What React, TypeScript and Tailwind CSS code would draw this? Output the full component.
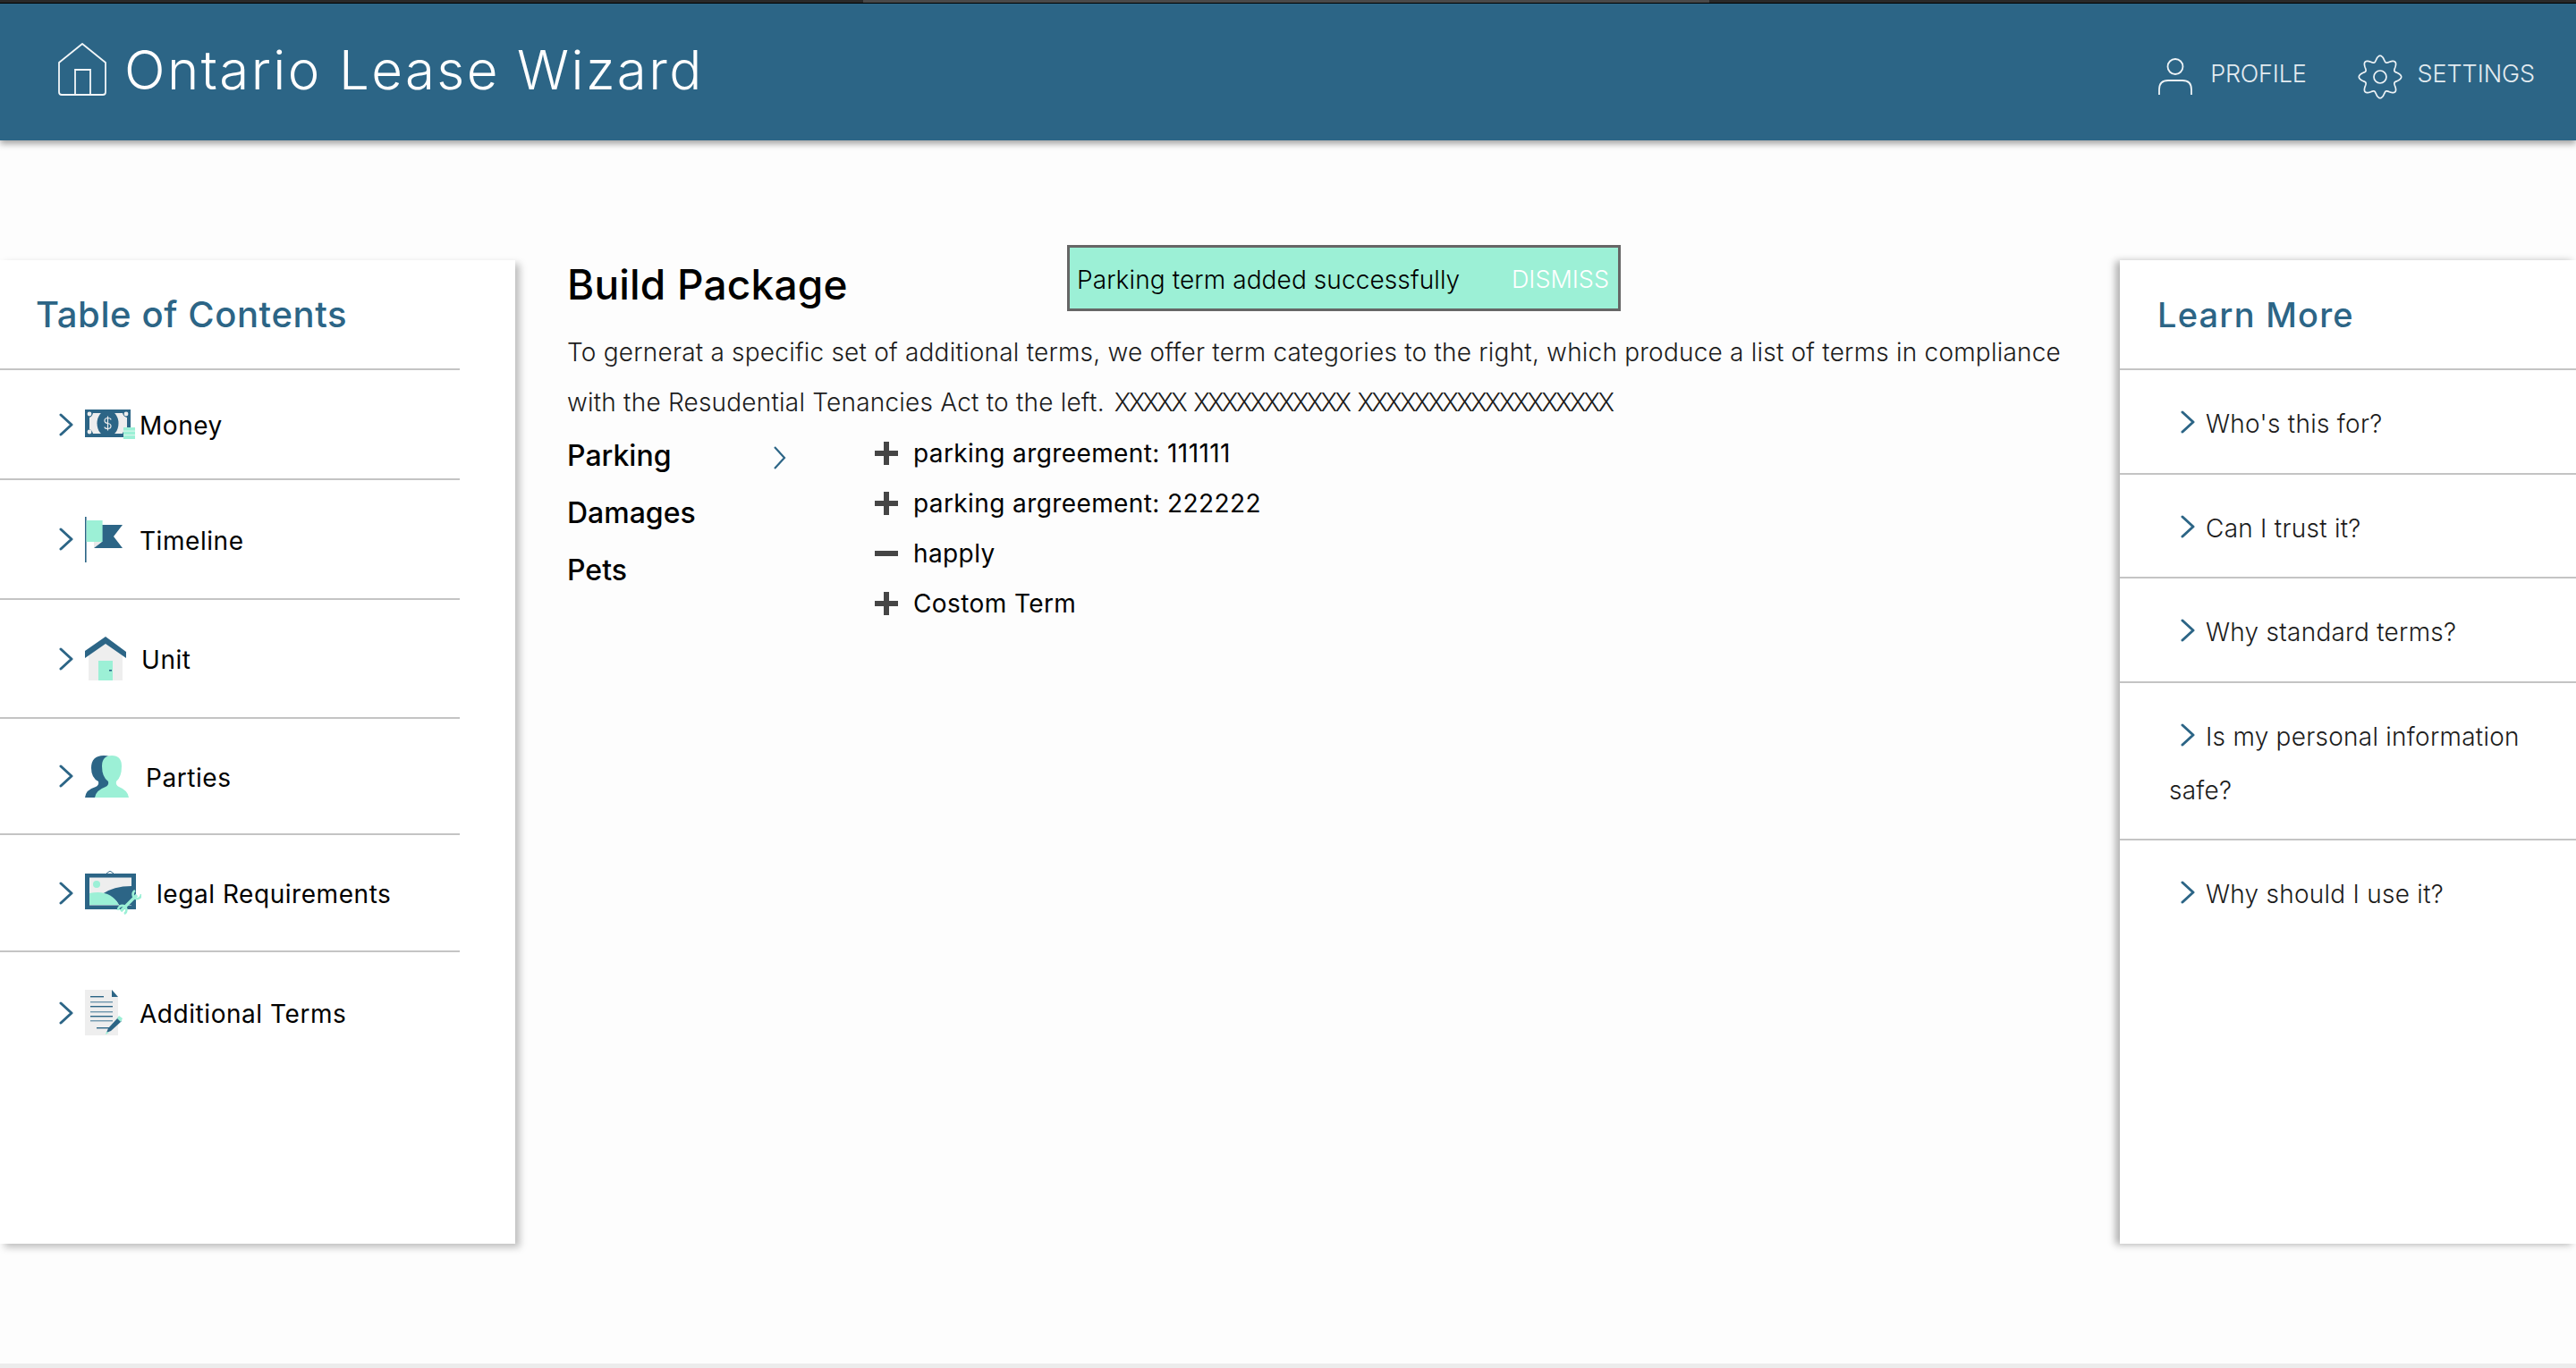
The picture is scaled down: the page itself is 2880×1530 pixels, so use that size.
import React from "react";

const BLUE = "#2c6586";
const MINT = "#9cf0d6";

function Chevron({ className = "" }: { className?: string }) {
  return (
    <svg width="16" height="26" viewBox="0 0 16 26" fill="none" className={className}>
      <path d="M2 2 L14 13 L2 24" stroke={BLUE} strokeWidth="3" strokeLinecap="round" strokeLinejoin="round" />
    </svg>
  );
}

function gearPath() {
  const pts: string[] = [];
  const n = 180;
  for (let i = 0; i <= n; i++) {
    const t = (i / n) * Math.PI * 2;
    const r = 20.5 + 3.2 * Math.cos(8 * t);
    const x = 25 + r * Math.sin(t);
    const y = 25 - r * Math.cos(t);
    pts.push(`${i === 0 ? "M" : "L"}${x.toFixed(2)} ${y.toFixed(2)}`);
  }
  return pts.join(" ") + "Z";
}

function HomeLogo() {
  return (
    <svg width="54" height="60" viewBox="0 0 54 60" fill="none" stroke="#f2f6f8" strokeWidth="1.8">
      <path d="M1 22 L27 1 L53 22 V55 Q53 58 50 58 H4 Q1 58 1 55 Z" strokeLinejoin="round" />
      <path d="M19 58 V30 H36 V58" />
    </svg>
  );
}

function MoneyIcon() {
  return (
    <svg width="56" height="33" viewBox="0 0 56 33">
      <rect x="0" y="0" width="51" height="31" fill={BLUE} />
      <path d="M5 9 Q8 8 9 4 H42 Q43 8 47 9 V22 Q43 23 42 27 H9 Q8 23 5 22 Z" fill="#eeeeee" />
      <ellipse cx="25.5" cy="15.5" rx="12" ry="15" fill={BLUE} />
      <circle cx="5" cy="5" r="2.4" fill="#eee" />
      <circle cx="46" cy="5" r="2.4" fill="#eee" />
      <circle cx="5" cy="25" r="2.4" fill="#eee" />
      <path d="M29 11.5 Q29 9.5 25.5 9.5 Q22 9.5 22 12.5 Q22 15 25.5 15.5 Q29 16 29 18.5 Q29 21.5 25.5 21.5 Q22 21.5 22 19.5 M25.5 7.5 V23.5" stroke="#eee" strokeWidth="1.2" fill="none" />
      <rect x="43" y="20" width="13" height="13" fill={MINT} />
      <rect x="43" y="23.5" width="13" height="1.2" fill="#d9f5ec" />
      <rect x="43" y="28" width="13" height="1.2" fill="#d9f5ec" />
    </svg>
  );
}

function FlagIcon() {
  return (
    <svg width="42" height="51" viewBox="0 0 42 51">
      <rect x="0" y="0" width="1.6" height="51" fill={BLUE} />
      <path d="M10 28 L10 35 L18 28 Z" fill="#e8e8e8" />
      <path d="M19 9 H42 L32 22 L42 35 H10 L19 28 Z" fill={BLUE} />
      <rect x="1.6" y="4" width="18" height="24" fill={MINT} />
    </svg>
  );
}

function HouseIcon() {
  return (
    <svg width="46" height="49" viewBox="0 0 46 49">
      <path d="M4 20 L23 7 L42 20 V49 H4 Z" fill="#eeeeee" />
      <path d="M0 16 L23 0 L46 17 V24 L23 8 L0 24 Z" fill={BLUE} />
      <rect x="15" y="27" width="16" height="22" fill={MINT} />
      <rect x="27" y="37" width="3" height="1.6" fill={BLUE} />
    </svg>
  );
}

function PeopleIcon() {
  return (
    <svg width="49" height="47" viewBox="0 0 49 47">
      <path d="M0 47 Q1 38 12 35 Q16 33 15 29 Q7 25 7 14 Q7 0 21 0 Q35 0 35 14 Q35 26 28 30 L28 47 Z" fill={BLUE} />
      <path d="M11 47 Q12 39 23 35 Q27 33 26 29 Q19 24 19 12 Q19 0 30 0 Q41 0 41 12 Q41 24 35 29 Q34 33 38 35 Q48 39 49 47 Z" fill={MINT} />
    </svg>
  );
}

function PictureIcon() {
  return (
    <svg width="63" height="49" viewBox="0 0 63 49">
      <path d="M24 3 L28 0 L32 3" fill="none" stroke={BLUE} strokeWidth="1" />
      <rect x="0" y="3" width="57" height="40" fill={BLUE} />
      <rect x="5" y="7.5" width="47" height="31" fill="#eeeeee" />
      <path d="M19 26 Q32 17 52 17 V38 H38 Q34 29 19 26 Z" fill={BLUE} />
      <path d="M5 25 Q28 20 38 38 H5 Z" fill={MINT} />
      <circle cx="13" cy="15" r="4" fill={MINT} />
      <path d="M40 45 L58 27" stroke={MINT} strokeWidth="3.4" />
      <path d="M56 22 A5 5 0 0 0 57 31 A5 5 0 0 0 63 26" fill="none" stroke={MINT} strokeWidth="2.6" />
      <path d="M44 48 A5 5 0 0 0 43 39 A5 5 0 0 0 37 44" fill="none" stroke={MINT} strokeWidth="2.6" />
    </svg>
  );
}

function DocIcon() {
  const lines: [number, number, number][] = [
    [6, 21, 7],
    [6, 31, 13],
    [6, 31, 18],
    [6, 31, 24],
    [6, 31, 29],
    [6, 31, 34],
    [13, 31, 42],
  ];
  return (
    <svg width="42" height="51" viewBox="0 0 42 51">
      <path d="M0 0 H30 L37 8 V51 H0 Z" fill="#eeeeee" />
      <path d="M30 0 L37 8 H30 Z" fill={BLUE} />
      {lines.map(([a, b, y], i) => (
        <rect key={i} x={a} y={y} width={b - a} height="1.4" fill={i % 2 ? "#6f97ad" : BLUE} />
      ))}
      <path d="M24 48 L26 43 L37 31 L41 35 L29 46 Z" fill={BLUE} />
      <path d="M36 32 L38 29 L42 32 L40 36 Z" fill={MINT} />
      <path d="M23 50 L24 47 L27 48 Z" fill={MINT} />
    </svg>
  );
}

function Plus() {
  return (
    <svg width="26" height="26" viewBox="0 0 26 26">
      <rect x="0" y="10" width="26" height="6" fill="#454545" />
      <rect x="10" y="0" width="6" height="26" fill="#454545" />
    </svg>
  );
}

function Minus() {
  return (
    <svg width="26" height="26" viewBox="0 0 26 26">
      <rect x="0" y="10" width="26" height="6" fill="#454545" />
    </svg>
  );
}

const toc = [
  { label: "Money", icon: <MoneyIcon />, h: "h-[123px]", w: "w-[61px]", border: true },
  { label: "Timeline", icon: <FlagIcon />, h: "h-[134px]", w: "w-[61px]", border: true },
  { label: "Unit", icon: <HouseIcon />, h: "h-[133px]", w: "w-[63px]", border: true },
  { label: "Parties", icon: <PeopleIcon />, h: "h-[130px]", w: "w-[68px]", border: true },
  { label: "legal Requirements", icon: <PictureIcon />, h: "h-[131px]", w: "w-[80px]", border: true },
  { label: "Additional Terms", icon: <DocIcon />, h: "h-[135px]", w: "w-[61px]", border: false },
];

const faq = ["Who's this for?", "Can I trust it?", "Why standard terms?", "Is my personal information safe?", "Why should I use it?"];

const terms = [
  { label: "parking argreement: 111111", add: true },
  { label: "parking argreement: 222222", add: true },
  { label: "happly", add: false },
  { label: "Costom Term", add: true },
];

export default function App() {
  return (
    <div className="relative flex h-[1530px] w-[2880px] flex-col overflow-hidden bg-[#fdfdfd] text-black [font-family:Inter,'Liberation_Sans',sans-serif]">
      <div className="flex h-1 shrink-0 border-b border-black">
        <div className="w-[965px] bg-[#2a2a2a]" />
        <div className="w-[946px] bg-[#4a4a4a]" />
        <div className="flex-1 bg-[#2a2a2a]" />
      </div>

      <header className="z-10 flex h-[153px] shrink-0 items-center justify-between bg-[#2c6586] pl-[65px] pr-[46px] shadow-[0_4px_7px_rgba(0,0,0,0.35)]">
        <div className="flex items-center gap-[20px] pb-[6px]">
          <HomeLogo />
          <span className="text-[60px] font-light leading-none tracking-[2.4px] text-white">Ontario Lease Wizard</span>
        </div>
        <nav className="flex items-center pt-[10px] text-[27px] font-light text-[#e3ebf0]">
          <div className="flex items-center gap-[20px]">
            <svg width="38" height="41" viewBox="0 0 38 41" fill="none" stroke="#eef3f6" strokeWidth="1.8">
              <circle cx="19" cy="9.5" r="8.5" />
              <path d="M1 41 V35 Q1 25 11 25 H27 Q37 25 37 35 V41" />
            </svg>
            <span className="-mt-[5px] tracking-[-0.2px]">PROFILE</span>
          </div>
          <div className="ml-[57px] flex items-center gap-[17px]">
            <svg width="50" height="50" viewBox="0 0 50 50" fill="none" stroke="#eef3f6" strokeWidth="1.7">
              <path d={gearPath()} />
              <circle cx="25" cy="25" r="7" />
            </svg>
            <span className="-mt-[5px] tracking-[-0.1px]">SETTINGS</span>
          </div>
        </nav>
      </header>

      <main className="flex flex-1 justify-between pt-[134px]">
        <aside className="h-[1100px] w-[576px] shrink-0 bg-white shadow-[5px_4px_8px_rgba(0,0,0,0.25)]">
          <h2 className="flex h-[123px] w-[514px] items-center border-b-2 border-[#c4c4c4] pl-[40px] text-[40px] font-medium tracking-[0.6px] text-[#2c6586]">
            Table of Contents
          </h2>
          {toc.map((t) => (
            <div
              key={t.label}
              className={`flex w-[514px] items-center pl-[66px] ${t.h} ${t.border ? "border-b-2 border-[#c4c4c4]" : ""}`}
            >
              <Chevron className="mr-[13px] shrink-0" />
              <div className={`flex shrink-0 items-center ${t.w}`}>{t.icon}</div>
              <span className="mt-[3px] text-[28px] tracking-[0.55px]">{t.label}</span>
            </div>
          ))}
        </aside>

        <section className="relative w-[1678px] shrink-0">
          <h1 className="text-[46px] font-medium leading-[54px] tracking-[0.2px]">Build Package</h1>
          <p className="mt-[21px] whitespace-nowrap text-[28px] font-light leading-[56px] tracking-[0.21px] text-[#1c1c1c]">
            To gernerat a specific set of additional terms, we offer term categories to the right, which produce a list of terms in compliance
            <br />
            with the Resudential Tenancies Act to the left. <span className="ml-[3px] tracking-[-2.7px] [word-spacing:4px]">XXXXX XXXXXXXXXXX XXXXXXXXXXXXXXXXXX</span>
          </p>
          <div className="flex">
            <div className="flex w-[344px] shrink-0 flex-col text-[32px] font-medium">
              <div className="flex h-[64px] items-center pr-[98px]">
                <span className="flex-1">Parking</span>
                <svg width="16" height="26" viewBox="0 0 16 26" fill="none" className="mt-[4px]">
                  <path d="M2 1 L13 13 L2 25" stroke={BLUE} strokeWidth="2.2" />
                </svg>
              </div>
              <div className="flex h-[64px] items-center">Damages</div>
              <div className="flex h-[64px] items-center">Pets</div>
            </div>
            <ul className="flex flex-col pt-[1px]">
              {terms.map((t) => (
                <li key={t.label} className="flex h-[56px] items-center gap-[17px] text-[28px] tracking-[0.4px]">
                  {t.add ? <Plus /> : <Minus />}
                  <span>{t.label}</span>
                </li>
              ))}
            </ul>
          </div>
          <div className="absolute left-[559px] top-[-17px] flex h-[74px] w-[619px] items-center justify-between border-[3px] border-[#666666] bg-[#9cf0d6] pl-[8px] pr-[10px] pt-[4px]">
            <span className="text-[28px] font-light tracking-[0.1px]">Parking term added successfully</span>
            <span className="text-[27px] font-light tracking-[0px] text-white">DISMISS</span>
          </div>
        </section>

        <aside className="h-[1100px] w-[510px] shrink-0 bg-white shadow-[-5px_1px_8px_rgba(0,0,0,0.3)]">
          <h2 className="flex h-[123px] items-center border-b-2 border-[#c4c4c4] pl-[42px] pt-[2px] text-[38px] font-medium tracking-[1.2px] text-[#2c6586]">
            Learn More
          </h2>
          {faq.map((q, i) => (
            <div
              key={q}
              className={`pl-[55px] pr-[40px] pt-[30px] pb-[24.5px] text-[28px] font-light leading-[60px] tracking-[0.25px] text-[#1c1c1c] ${i < faq.length - 1 ? "border-b-2 border-[#c4c4c4]" : ""}`}
            >
              <Chevron className="ml-[13px] mr-[12px] inline-block align-[-1px]" />
              {q}
            </div>
          ))}
        </aside>
      </main>

      <div className="h-[5px] shrink-0 bg-[#ececec]" />
    </div>
  );
}
